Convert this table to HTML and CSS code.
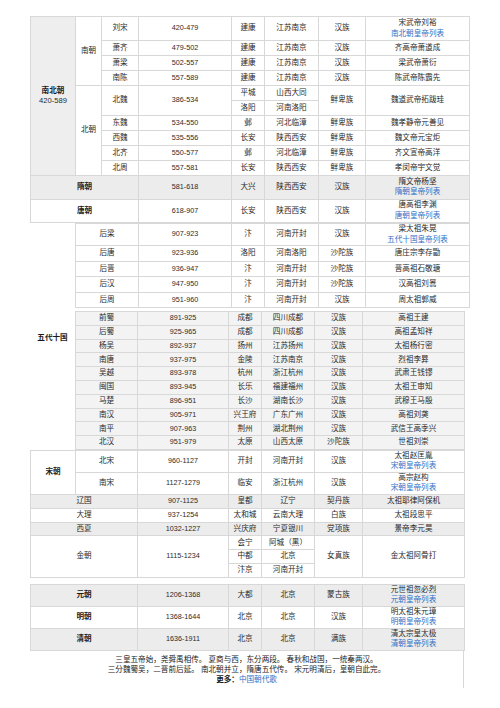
FILE: index.html
```html
<!DOCTYPE html>
<html lang="zh">
<head>
<meta charset="utf-8">
<title>中国朝代表</title>
<link rel="stylesheet" href="styles.css">
</head>
<body>
<div class="page">
  <table class="tbl t-a">
    <colgroup><col class="c45"><col class="c26"><col class="c37"><col class="c93"><col class="c33"><col class="c54"><col class="c47"><col class="c104"></colgroup>
    <tr class="d0">
      <td rowspan="10" class="region"><b>南北朝</b><br>420-589</td>
      <td rowspan="4">南朝</td>
      <td>刘宋</td><td class="y">420-479</td><td>建康</td><td>江苏南京</td><td>汉族</td>
      <td>宋武帝刘裕<br><a href="#">南北朝皇帝列表</a></td>
    </tr>
    <tr class="s"><td>萧齐</td><td class="y">479-502</td><td>建康</td><td>江苏南京</td><td>汉族</td><td>齐高帝萧道成</td></tr>
    <tr class="s"><td>萧梁</td><td class="y">502-557</td><td>建康</td><td>江苏南京</td><td>汉族</td><td>梁武帝萧衍</td></tr>
    <tr class="s"><td>南陈</td><td class="y">557-589</td><td>建康</td><td>江苏南京</td><td>汉族</td><td>陈武帝陈霸先</td></tr>
    <tr class="s">
      <td rowspan="6">北朝</td>
      <td rowspan="2">北魏</td><td rowspan="2" class="y">386-534</td><td>平城</td><td>山西大同</td>
      <td rowspan="2">鲜卑族</td><td rowspan="2">魏道武帝拓跋珪</td>
    </tr>
    <tr class="s"><td>洛阳</td><td>河南洛阳</td></tr>
    <tr class="s"><td>东魏</td><td class="y">534-550</td><td>邺</td><td>河北临漳</td><td>鲜卑族</td><td>魏孝静帝元善见</td></tr>
    <tr class="s"><td>西魏</td><td class="y">535-556</td><td>长安</td><td>陕西西安</td><td>鲜卑族</td><td>魏文帝元宝炬</td></tr>
    <tr class="s"><td>北齐</td><td class="y">550-577</td><td>邺</td><td>河北临漳</td><td>鲜卑族</td><td>齐文宣帝高洋</td></tr>
    <tr class="s"><td>北周</td><td class="y">557-581</td><td>长安</td><td>陕西西安</td><td>鲜卑族</td><td>孝闵帝宇文觉</td></tr>
    <tr class="d1 gray">
      <td colspan="3"><b>隋朝</b></td><td class="y">581-618</td><td>大兴</td><td>陕西西安</td><td>汉族</td>
      <td>隋文帝杨坚<br><a href="#">隋朝皇帝列表</a></td>
    </tr>
    <tr class="d1">
      <td colspan="3"><b>唐朝</b></td><td class="y">618-907</td><td>长安</td><td>陕西西安</td><td>汉族</td>
      <td>唐高祖李渊<br><a href="#">唐朝皇帝列表</a></td>
    </tr>
  </table>

  <div class="wd">
    <div class="wd-label">五代十国</div>
    <div class="wd-tables">
      <table class="tbl t-wd">
        <colgroup><col class="c63"><col class="c93"><col class="c33"><col class="c54"><col class="c47"><col class="c104"></colgroup>
        <tr class="d2"><td>后梁</td><td class="y">907-923</td><td>汴</td><td>河南开封</td><td>汉族</td><td>梁太祖朱晃<br><a href="#">五代十国皇帝列表</a></td></tr>
        <tr class="s2"><td>后唐</td><td class="y">923-936</td><td>洛阳</td><td>河南洛阳</td><td>沙陀族</td><td>唐庄宗李存勖</td></tr>
        <tr class="s2"><td>后晋</td><td class="y">936-947</td><td>汴</td><td>河南开封</td><td>沙陀族</td><td>晋高祖石敬瑭</td></tr>
        <tr class="s2"><td>后汉</td><td class="y">947-950</td><td>汴</td><td>河南开封</td><td>沙陀族</td><td>汉高祖刘暠</td></tr>
        <tr class="s2"><td>后周</td><td class="y">951-960</td><td>汴</td><td>河南开封</td><td>汉族</td><td>周太祖郭威</td></tr>
      </table>
      <table class="tbl t-sg">
        <colgroup><col class="c62"><col class="c91"><col class="c33"><col class="c53"><col class="c48"><col class="c102"></colgroup>
        <tr class="s3"><td>前蜀</td><td class="y">891-925</td><td>成都</td><td>四川成都</td><td>汉族</td><td>高祖王建</td></tr>
        <tr class="s3"><td>后蜀</td><td class="y">925-965</td><td>成都</td><td>四川成都</td><td>汉族</td><td>高祖孟知祥</td></tr>
        <tr class="s3"><td>杨吴</td><td class="y">892-937</td><td>扬州</td><td>江苏扬州</td><td>汉族</td><td>太祖杨行密</td></tr>
        <tr class="s3"><td>南唐</td><td class="y">937-975</td><td>金陵</td><td>江苏南京</td><td>汉族</td><td>烈祖李昪</td></tr>
        <tr class="s3"><td>吴越</td><td class="y">893-978</td><td>杭州</td><td>浙江杭州</td><td>汉族</td><td>武肃王钱镠</td></tr>
        <tr class="s3"><td>闽国</td><td class="y">893-945</td><td>长乐</td><td>福建福州</td><td>汉族</td><td>太祖王审知</td></tr>
        <tr class="s3"><td>马楚</td><td class="y">896-951</td><td>长沙</td><td>湖南长沙</td><td>汉族</td><td>武穆王马殷</td></tr>
        <tr class="s3"><td>南汉</td><td class="y">905-971</td><td>兴王府</td><td>广东广州</td><td>汉族</td><td>高祖刘䶮</td></tr>
        <tr class="s3"><td>南平</td><td class="y">907-963</td><td>荆州</td><td>湖北荆州</td><td>汉族</td><td>武信王高季兴</td></tr>
        <tr class="s3"><td>北汉</td><td class="y">951-979</td><td>太原</td><td>山西太原</td><td>沙陀族</td><td>世祖刘崇</td></tr>
      </table>
    </div>
  </div>

  <table class="tbl t-b">
    <colgroup><col class="c45"><col class="c62"><col class="c91"><col class="c33"><col class="c53"><col class="c48"><col class="c102"></colgroup>
    <tr class="d3">
      <td rowspan="2"><b>宋朝</b></td>
      <td>北宋</td><td class="y">960-1127</td><td>开封</td><td>河南开封</td><td>汉族</td>
      <td>太祖赵匡胤<br><a href="#">宋朝皇帝列表</a></td>
    </tr>
    <tr class="d3">
      <td>南宋</td><td class="y">1127-1279</td><td>临安</td><td>浙江杭州</td><td>汉族</td>
      <td>高宗赵构<br><a href="#">宋朝皇帝列表</a></td>
    </tr>
    <tr class="s3 gray"><td colspan="2">辽国</td><td class="y">907-1125</td><td>皇都</td><td>辽宁</td><td>契丹族</td><td>太祖耶律阿保机</td></tr>
    <tr class="s3"><td colspan="2">大理</td><td class="y">937-1254</td><td>太和城</td><td>云南大理</td><td>白族</td><td>太祖段思平</td></tr>
    <tr class="s3 gray"><td colspan="2">西夏</td><td class="y">1032-1227</td><td>兴庆府</td><td>宁夏银川</td><td>党项族</td><td>景帝李元昊</td></tr>
    <tr class="s3">
      <td colspan="2" rowspan="3">金朝</td><td rowspan="3" class="y">1115-1234</td><td>会宁</td><td>阿城（黑）</td>
      <td rowspan="3">女真族</td><td rowspan="3">金太祖阿骨打</td>
    </tr>
    <tr class="s3"><td>中都</td><td>北京</td></tr>
    <tr class="s3"><td>汴京</td><td>河南开封</td></tr>
  </table>

  <table class="tbl t-c">
    <colgroup><col class="c107"><col class="c91"><col class="c33"><col class="c53"><col class="c48"><col class="c102"></colgroup>
    <tr class="d3 gray"><td><b>元朝</b></td><td class="y">1206-1368</td><td>大都</td><td>北京</td><td>蒙古族</td><td>元世祖忽必烈<br><a href="#">元朝皇帝列表</a></td></tr>
    <tr class="d3"><td><b>明朝</b></td><td class="y">1368-1644</td><td>北京</td><td>北京</td><td>汉族</td><td>明太祖朱元璋<br><a href="#">明朝皇帝列表</a></td></tr>
    <tr class="d3 gray"><td><b>清朝</b></td><td class="y">1636-1911</td><td>北京</td><td>北京</td><td>满族</td><td>清太宗皇太极<br><a href="#">清朝皇帝列表</a></td></tr>
  </table>

  <div class="poem">
    <p>三皇五帝始，尧舜禹相传。 夏商与西，东分两段。 春秋和战国，一统秦两汉。</p>
    <p>三分魏蜀吴，二晋前后延。 南北朝并立，隋唐五代传。 宋元明清后，皇朝自此完。</p>
    <p><b>更多：</b><a href="#">中国朝代歌</a></p>
  </div>
</div>
</body>
</html>
```

FILE: styles.css
```css
body {
  margin: 0;
  background: #fff;
  font-family: "Liberation Sans", "Noto Sans CJK SC", sans-serif;
  font-size: 7.6px;
  color: #2a2a2a;
}

.page {
  padding: 16px 0 0 30px;
}

.tbl {
  border-collapse: collapse;
  table-layout: fixed;
}

.tbl td {
  border: 1px solid #d8d8d8;
  padding: 0;
  text-align: center;
  vertical-align: middle;
  line-height: 10.5px;
  white-space: nowrap;
  overflow: hidden;
}

.tbl b { color: #1a1a1a; }

a {
  color: #2f6fc6;
  text-decoration: none;
}

.y { font-size: 7.2px; }

.gray td { background: #ececec; }
.region { background: #eeeeee; line-height: 10px; }

.t-a { width: 439px; }
.t-wd { width: 394px; }
.t-sg { width: 389px; }
.t-sg td { background: #f3f3f3; }
.t-b { width: 434px; }
.t-c { width: 434px; margin-top: 6px; }

.c26 { width: 26px; }
.c33 { width: 33px; }
.c37 { width: 37px; }
.c45 { width: 45px; }
.c47 { width: 47px; }
.c48 { width: 48px; }
.c53 { width: 53px; }
.c54 { width: 54px; }
.c62 { width: 62px; }
.c63 { width: 63px; }
.c91 { width: 91px; }
.c93 { width: 93px; }
.c102 { width: 102px; }
.c104 { width: 104px; }
.c107 { width: 107px; }

tr.d0 { height: 24px; }
tr.s { height: 15px; }
tr.d1 { height: 23.5px; }
tr.d2 { height: 22px; }
tr.s2 { height: 15.5px; }
tr.s3 { height: 13.8px; }
tr.d3 { height: 21px; }

.wd {
  display: flex;
  width: 439px;
}

.wd-label {
  width: 45px;
  flex: none;
  display: flex;
  align-items: center;
  justify-content: center;
  font-weight: bold;
  color: #1a1a1a;
}

.wd-tables {
  display: flex;
  flex-direction: column;
  gap: 3px;
}

.poem {
  width: 434px;
  box-sizing: border-box;
  border-right: 1px solid #d8d8d8;
  padding: 4px 0 3px;
  text-align: center;
  line-height: 10px;
  color: #1a1a1a;
}

.poem p { margin: 0; }
```
